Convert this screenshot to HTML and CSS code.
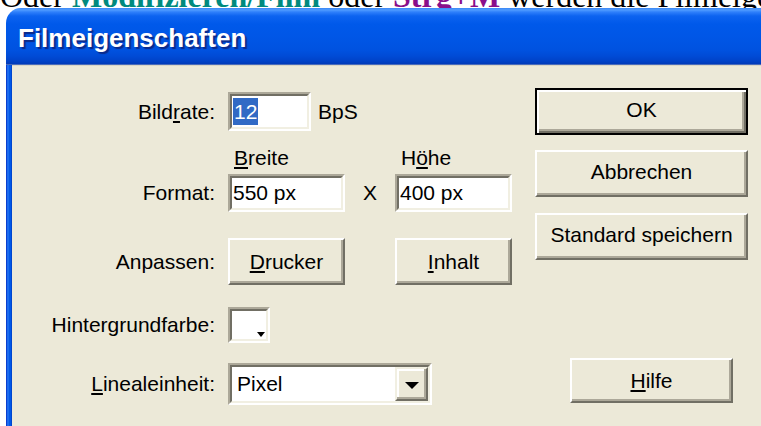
FILE: index.html
```html
<!DOCTYPE html>
<html lang="de">
<head>
<meta charset="utf-8">
<title>Filmeigenschaften</title>
<link rel="stylesheet" href="styles.css">
</head>
<body>
<p class="intro"><span class="intro-line">Oder <b class="menu">Modifizieren/Film</b> oder <b class="keys">Strg+M</b> werden die Filmeigenschaften festgelegt.</span></p>

<div class="window">
  <div class="titlebar"><h1 class="title">Filmeigenschaften</h1></div>
  <div class="frame">
    <div class="client">
      <div class="form">
        <div class="row r-rate">
          <span class="lbl">Bild<u>r</u>ate:</span>
          <div class="ctrl">
            <div class="field w-rate"><div class="field-in"><span class="sel">12</span></div></div>
            <span class="unit">BpS</span>
          </div>
        </div>

        <div class="row r-head">
          <span></span>
          <div class="ctrl heads">
            <span class="head"><u>B</u>reite</span>
            <span class="times-gap"></span>
            <span class="head">H<u>ö</u>he</span>
          </div>
        </div>

        <div class="row r-size">
          <span class="lbl">Format:</span>
          <div class="ctrl">
            <div class="field w-size"><div class="field-in">550 px</div></div>
            <span class="times">X</span>
            <div class="field w-size"><div class="field-in">400 px</div></div>
          </div>
        </div>

        <div class="row r-fit">
          <span class="lbl">Anpassen:</span>
          <div class="ctrl">
            <div class="btn w-size btn-fit"><u>D</u>rucker</div>
            <span class="times-gap"></span>
            <div class="btn w-size btn-fit"><u>I</u>nhalt</div>
          </div>
        </div>

        <div class="row r-color">
          <span class="lbl">Hintergrundfarbe:</span>
          <div class="ctrl">
            <div class="field swatch"><div class="field-in swatch-in"><span class="swatch-arrow"></span></div></div>
          </div>
        </div>

        <div class="row r-unit">
          <span class="lbl"><u>L</u>ineal<span>einheit:</span></span>
          <div class="ctrl">
            <div class="field combo">
              <div class="field-in combo-in">
                <span class="combo-text">Pixel</span>
                <span class="combo-btn"><span class="combo-arrow"></span></span>
              </div>
            </div>
          </div>
        </div>
      </div>

      <div class="actions">
        <div class="btn btn-wide btn-ok">OK</div>
        <div class="btn btn-wide btn-cancel">Abbrechen</div>
        <div class="btn btn-wide btn-save">Standard speichern</div>
        <div class="btn btn-help"><u>H</u>ilfe</div>
      </div>
    </div>
  </div>
</div>
</body>
</html>
```

FILE: styles.css
```css
html, body {
  margin: 0;
  padding: 0;
  background: #fff;
  height: 100%;
  overflow: hidden;
}

/* sentence of the surrounding document, mostly hidden behind the dialog */
.intro {
  margin: 0;
  height: 8px;
  overflow: hidden;
  white-space: nowrap;
  font-family: "Liberation Serif", "Times New Roman", serif;
  font-size: 32px;
  line-height: 32px;
  color: #000;
}
.intro-line {
  display: block;
  margin-top: -20px;
}
.menu { color: #008a7e; }
.keys { color: #8a0e8a; }

/* dialog window */
.window {
  margin-left: 6px;
  height: 418px;
  display: flex;
  flex-direction: column;
}

.titlebar {
  flex: none;
  height: 57px;
  border-radius: 15px 0 0 0;
  box-sizing: border-box;
  padding: 2px 0 0 12px;
  display: flex;
  align-items: center;
  background: linear-gradient(to bottom,
    #3b87f4 0px, #4f9bff 2px, #2f80fb 4px, #0c63f0 8px,
    #0059ea 16px, #0056e6 30px, #0052e0 42px,
    #004bd6 48px, #0042c8 53px, #003ab8 56px, #8f9bbd 57px);
}
.title {
  margin: 0;
  font-family: "Liberation Sans", Arial, sans-serif;
  font-weight: bold;
  font-size: 26px;
  line-height: 30px;
  color: #fff;
  text-shadow: 2px 2px 1px #0b2a8a;
}

.frame {
  flex: 1;
  padding-left: 6px;
  background: linear-gradient(to right,
    #0a3ecf 0, #0a3ecf 1px, #1b6bef 1px, #1b6bef 3px,
    #0058e8 3px, #0058e8 5px, #0046cf 5px);
  display: flex;
}

.client {
  flex: 1;
  background: #ece9d8;
  border-top: 1px solid #d9d5c6;
  display: flex;
  font-family: "Liberation Sans", Arial, sans-serif;
  font-size: 21px;
  line-height: 24px;
  color: #000;
}

u {
  text-decoration-thickness: 2px;
  text-underline-offset: 2px;
}

/* left part: labelled settings */
.form {
  flex: none;
  width: 523px;
  display: flex;
  flex-direction: column;
}
.row {
  display: grid;
  grid-template-columns: 203px auto;
  column-gap: 13px;
  align-items: center;
}
.lbl {
  text-align: right;
  white-space: nowrap;
}
.ctrl {
  display: flex;
  align-items: center;
}

.r-rate { margin-top: 26px; }
.r-head { height: 43px; align-items: end; }
.r-fit { margin-top: 26px; }
.r-color { margin-top: 22px; }
.r-unit { margin-top: 20px; }

/* sunken edit boxes */
.field {
  box-sizing: border-box;
  border: 2px solid;
  border-color: #aca899 #fff #fff #aca899;
}
.field-in {
  box-sizing: border-box;
  height: 100%;
  border: 2px solid;
  border-color: #716f64 #f1efe2 #f1efe2 #716f64;
  background: #fff;
  display: flex;
  align-items: center;
  padding-left: 1px;
  white-space: nowrap;
}
.w-rate { width: 83px; height: 39px; }
.w-size { width: 117px; height: 38px; }

.sel {
  line-height: 27px;
  padding: 0 1px;
  background: #316ac5;
  color: #fff;
}
.unit { margin-left: 7px; }

.heads { padding-bottom: 4px; }
.head {
  box-sizing: border-box;
  width: 117px;
  padding-left: 6px;
}
.times-gap { width: 50px; flex: none; }
.times {
  width: 50px;
  text-align: center;
  flex: none;
}

/* raised push buttons */
.btn {
  box-sizing: border-box;
  border: 2px solid;
  border-color: #fff #716f64 #716f64 #fff;
  box-shadow: inset -2px -2px 0 #aca899;
  background: #ece9d8;
  display: flex;
  align-items: center;
  justify-content: center;
  white-space: nowrap;
}
.btn-fit { height: 47px; }

/* colour well */
.swatch { width: 42px; height: 36px; }
.swatch-in {
  justify-content: flex-end;
  align-items: flex-end;
  padding: 0 1px 2px 0;
}
.swatch-arrow {
  width: 0;
  height: 0;
  border-left: 4px solid transparent;
  border-right: 4px solid transparent;
  border-top: 5px solid #000;
}

/* drop-down list */
.combo { width: 204px; height: 42px; }
.combo-in {
  padding-left: 5px;
  justify-content: space-between;
}
.combo-btn {
  box-sizing: border-box;
  width: 33px;
  height: 100%;
  border: 2px solid;
  border-color: #f1efe2 #716f64 #716f64 #f1efe2;
  box-shadow: inset -2px -2px 0 #aca899, inset 2px 2px 0 #fff;
  background: #ece9d8;
  display: flex;
  align-items: center;
  justify-content: center;
}
.combo-arrow {
  width: 0;
  height: 0;
  border-left: 7px solid transparent;
  border-right: 7px solid transparent;
  border-top: 7px solid #000;
  margin-top: 2px;
}

/* right part: dialog commands */
.actions {
  flex: none;
  width: 213px;
  padding-top: 22px;
  display: flex;
  flex-direction: column;
}
.btn-wide {
  height: 47px;
  padding-bottom: 3px;
}
.btn-ok {
  border: 2px solid #000;
  box-shadow: inset 2px 2px 0 #fff, inset -2px -2px 0 #716f64, inset -4px -4px 0 #aca899;
}
.btn-cancel { margin-top: 15px; }
.btn-save { margin-top: 16px; }
.btn-help {
  margin-top: 98px;
  margin-left: 35px;
  width: 163px;
  height: 45px;
}
```
